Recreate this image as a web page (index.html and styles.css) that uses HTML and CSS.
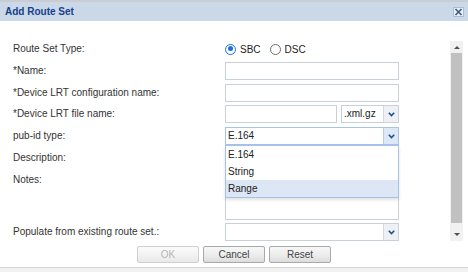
FILE: index.html
```html
<!DOCTYPE html>
<html>
<head>
<meta charset="utf-8"/>
    <title>Add Route Set</title>
    <link rel="stylesheet" href="styles.css">
</head>
<body>
    <div class="win">
        <div class="title">
            <span class="title-text">Add Route Set</span>
            <span class="close">
                <svg width="9" height="8" viewBox="0 0 9 8"><path d="M1.5 1 L7.5 7 M7.5 1 L1.5 7" stroke="#3c5a84" stroke-width="1.6"/></svg>
            </span>
        </div>
        <div class="main">
            <div class="form">
                <div class="lbl">Route Set Type:</div>
                <div class="radios">
                    <span class="radio on"></span><span class="rtext">SBC</span>
                    <span class="radio"></span><span class="rtext">DSC</span>
                </div>

                <div class="lbl">*Name:</div>
                <div class="field"></div>

                <div class="lbl">*Device LRT configuration name:</div>
                <div class="field"></div>

                <div class="lbl">*Device LRT file name:</div>
                <div class="file-row">
                    <div class="field file"></div>
                    <div class="combo ext">
                        <span class="combo-val">.xml.gz</span>
                        <span class="trigger"><svg width="7" height="5" viewBox="0 0 7 5"><path d="M0.8 0.8 L3.5 3.6 L6.2 0.8" fill="none" stroke="#1f4f90" stroke-width="1.6"/></svg></span>
                    </div>
                </div>

                <div class="lbl">pub-id type:</div>
                <div class="combo focus">
                    <span class="combo-val">E.164</span>
                    <span class="trigger"><svg width="7" height="5" viewBox="0 0 7 5"><path d="M0.8 0.8 L3.5 3.6 L6.2 0.8" fill="none" stroke="#1f4f90" stroke-width="1.6"/></svg></span>
                    <ul class="list">
                        <li>E.164</li>
                        <li>String</li>
                        <li class="sel">Range</li>
                    </ul>
                </div>

                <div class="lbl">Description:</div>
                <div class="field"></div>

                <div class="lbl">Notes:</div>
                <div class="field area"></div>

                <div class="lbl">Populate from existing route set.:</div>
                <div class="combo">
                    <span class="combo-val"></span>
                    <span class="trigger"><svg width="7" height="5" viewBox="0 0 7 5"><path d="M0.8 0.8 L3.5 3.6 L6.2 0.8" fill="none" stroke="#1f4f90" stroke-width="1.6"/></svg></span>
                </div>
            </div>
            <div class="vscroll">
                <div class="sb-btn up"><span class="tri-up"></span></div>
                <div class="sb-thumb"></div>
                <div class="sb-rest"><span class="tri-down"></span></div>
            </div>
        </div>
        <div class="footer">
            <span class="btn off">OK</span>
            <span class="btn">Cancel</span>
            <span class="btn">Reset</span>
        </div>
    </div>
</body>
</html>
```
FILE: styles.css
```css
body{ margin: 0;background: #f2f2f2;font-family: "Liberation Sans", Arial, sans-serif;font-size: 10px;color: #222;}
.win{ background: #fff;border-top: 2px solid #c9ccd2;border-bottom: 1px solid #d4d4d4;}

.title{ height: 19px;background: #cbd8e8;display: flex;align-items: center;justify-content: space-between;padding: 0 4px 0 5px;}
.title-text{ font-weight: bold;color: #15428b;font-size: 10px;}
.close{ width: 11px;height: 10px;box-sizing: border-box;border: 1px solid #a8bdd8;background: #e9eff8;display: flex;align-items: center;justify-content: center;}
.close svg{ display: block;}

.main{ display: flex;align-items: flex-start;padding-top: 19px;}
.form{ display: grid;grid-template-columns: 212px 174px;grid-template-rows: 18px 18px 18px 18px 18px 18px 49px 18px;row-gap: 3.75px;padding-left: 13px;}
.lbl{ line-height: 18px;align-self: start;color: #333;}

.radios{ display: flex;align-items: center;}
.radio{ width: 11px;height: 11px;box-sizing: border-box;border: 1px solid #6e6e6e;border-radius: 50%;margin-right: 4px;position: relative;}
.radio.on{ border: 1.5px solid #1a6fe0;}
.radio.on:after{ content: "";position: absolute;left: 1.5px;top: 1.5px;width: 5px;height: 5px;border-radius: 50%;background: #1a6fe0;}
.rtext{ margin-right: 9px;color: #222;}

.field{ height: 18px;box-sizing: border-box;border: 1px solid #c8d0da;background: #fff;}
.field.area{ height: 49px;}
.file-row{ display: flex;gap: 4px;}
.field.file{ width: 112px;}

.combo{ height: 18px;box-sizing: border-box;border: 1px solid #c8d0da;background: #fff;display: flex;position: relative;}
.combo.ext{ width: 58px;}
.combo.focus{ border-color: #a6c2e8;}
.combo-val{ flex: 1;line-height: 16px;padding-left: 2px;color: #222;}
.trigger{ width: 14px;border-left: 1px solid #d3d9e1;background: #edf0f4;display: flex;align-items: center;justify-content: center;}
.focus .trigger{ background: #dde8f6;border-left-color: #b9cde8;}
.trigger svg{ display: block;}

.list{ position: absolute;left: -1px;top: 17px;width: 174px;box-sizing: border-box;margin: 0;padding: 0;list-style: none;background: #fff;border: 1px solid #a6c2e8;box-shadow: 0 2px 3px rgba(0,0,0,0.12);}
.list li{ height: 17px;line-height: 17px;padding-left: 2px;color: #222;}
.list li.sel{ background: #dce6f4;}

.vscroll{ margin: 1px 0 0 51px;width: 13px;height: 200px;background: #f1f1f1;display: flex;flex-direction: column;}
.sb-btn{ height: 12px;display: flex;align-items: center;justify-content: center;}
.sb-thumb{ height: 170px;background: #c1c1c1;margin: 0 1px;}
.sb-rest{ flex: 1;display: flex;align-items: flex-end;justify-content: center;padding-bottom: 5px;}
.tri-up{ width: 0;height: 0;border-left: 3px solid transparent;border-right: 3px solid transparent;border-bottom: 3px solid #505050;}
.tri-down{ width: 0;height: 0;border-left: 3px solid transparent;border-right: 3px solid transparent;border-top: 3px solid #505050;}

.footer{ display: flex;justify-content: center;gap: 4px;padding: 5px 0 4px;}
.btn{ width: 62px;height: 17px;box-sizing: border-box;border: 1px solid #a9a9a9;border-radius: 2px;background: linear-gradient(#f7f7f7, #ececec 55%, #dcdcdc);text-align: center;line-height: 15px;color: #444;}
.btn.off{ color: #b4b4b4;border-color: #cfcfcf;background: linear-gradient(#fbfbfb, #f2f2f2 55%, #e8e8e8);}
```
